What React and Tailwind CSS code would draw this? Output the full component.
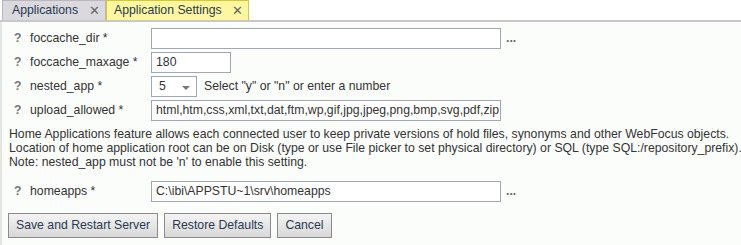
const rows = [
  { label: "foccache_dir *", value: "", wide: true, dots: true },
  { label: "foccache_maxage *", value: "180" },
  { label: "nested_app *", select: "5" },
  {
    label: "upload_allowed *",
    value:
      "html,htm,css,xml,txt,dat,ftm,wp,gif,jpg,jpeg,png,bmp,svg,pdf,zip,csv,tsv,txt,js,json",
    wide: true,
  },
];

const Field = ({ row }) => (
  <div className="flex items-center h-[24px]">
    <span className="w-[16px] pl-[12px] box-content font-bold text-[#777]">?</span>
    <span className="w-[121px] text-[#333] whitespace-nowrap">{row.label}</span>
    {row.select ? (
      <>
        <div className="w-[46px] h-[21px] border border-[#a0a8b4] bg-white flex items-center justify-between pl-[7px] pr-[6px]">
          <span>{row.select}</span>
          <svg width="8" height="4" viewBox="0 0 8 4" className="mt-[4px]">
            <path d="M0 0h8L4 4z" fill="#777" />
          </svg>
        </div>
        <span className="ml-[7px] text-[#333]">Select "y" or "n" or enter a number</span>
      </>
    ) : (
      <>
        <div
          className={`${row.wide ? "w-[350px]" : "w-[80px]"} h-[21px] border border-[#a0a8b4] bg-white px-[4px] flex items-center overflow-hidden whitespace-nowrap`}
        >
          {row.value}
        </div>
        {row.dots && <span className="ml-[5px] text-[#666] font-bold">...</span>}
      </>
    )}
  </div>
);

const App = () => {
  return (
    <div
      className="w-[741px] h-[245px] bg-[#fbfdfb] text-[12.25px] text-[#333] overflow-hidden"
      style={{ fontFamily: '"Liberation Sans", Arial, sans-serif' }}
    >
      <div className="flex items-end h-[22px] bg-white border-b-2 border-[#c8c8c8]">
        <div className="flex items-center h-[20px] ml-[2px] pl-[9px] pr-[5px] bg-[#d9d9de] border border-b-0 border-[#b8b8bc]">
          <span className="text-[#2a3a52]">Applications</span>
          <span className="ml-[11px] text-[#666] text-[13px]">✕</span>
        </div>
        <div className="flex items-center h-[20px] pl-[7px] pr-[5px] bg-[#fdf7a0] border border-b-0 border-[#d5c640]">
          <span className="text-[#2a3a52]">Application Settings</span>
          <span className="ml-[10px] text-[#666] text-[13px]">✕</span>
        </div>
      </div>
      <div className="border-l-2 border-[#e4e6e4] h-full pt-[4px]">
        {rows.map((r, i) => (
          <Field key={i} row={r} />
        ))}
        <div className="pl-[7px] leading-[14px] mt-[5px] whitespace-nowrap">
          <p>Home Applications feature allows each connected user to keep private versions of hold files, synonyms and other WebFocus objects.</p>
          <p>Location of home application root can be on Disk (type or use File picker to set physical directory) or SQL (type SQL:/repository_prefix).</p>
          <p>Note: nested_app must not be 'n' to enable this setting.</p>
        </div>
        <div className="mt-[10px]">
          <Field row={{ label: "homeapps *", value: "C:\\ibi\\APPSTU~1\\srv\\homeapps", wide: true, dots: true }} />
        </div>
        <div className="flex gap-[6px] pl-[6px] mt-[10px]">
          {["Save and Restart Server", "Restore Defaults", "Cancel"].map((b) => (
            <button
              key={b}
              className="h-[25px] px-[7px] border border-[#8a8a8a] bg-gradient-to-b from-[#f4f4f4] to-[#d8d8d8] text-[#2a3a52]"
            >
              {b}
            </button>
          ))}
        </div>
      </div>
    </div>
  );
};

export default App;
